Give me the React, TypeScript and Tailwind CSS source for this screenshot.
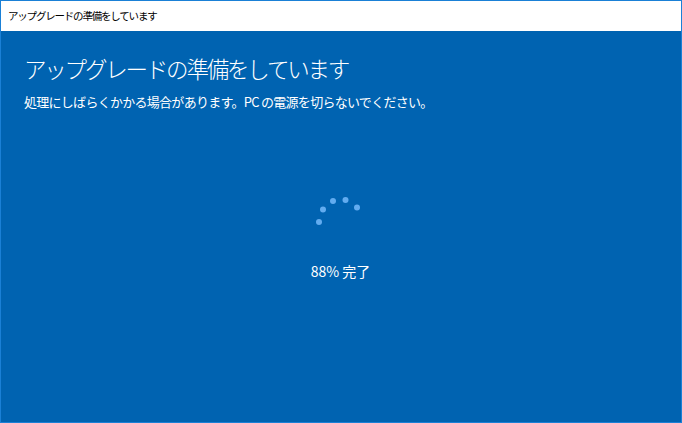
import React from "react";

const font = { fontFamily: '"Noto Sans CJK JP", "Noto Sans", sans-serif' };

export default function App() {
  const dots = [
    [319, 222],
    [323, 209.5],
    [333, 201],
    [345.5, 200],
    [357, 207.5],
  ];
  return (
    <div
      className="w-[682px] h-[423px] border border-[#1a80d6] bg-[#0063b1] flex flex-col overflow-hidden"
      style={font}
    >
      <div className="h-[30px] bg-white flex items-center pl-[7px] text-[10.5px] tracking-[-1.2px] text-black shrink-0">
        アップグレードの準備をしています
      </div>
      <div className="flex-1 relative text-white">
        <div className="pl-[23px] pt-[19px]">
          <div className="text-[22.5px] leading-[36px] font-light tracking-[-2.2px]">
            アップグレードの準備をしています
          </div>
          <div className="text-[13px] leading-[20px] mt-[6px] tracking-[-0.72px]">
            処理にしばらくかかる場合があります。PC の電源を切らないでください。
          </div>
        </div>
        <svg
          className="absolute left-0 top-0"
          width="680"
          height="392"
          viewBox="0 31 680 392"
        >
          {dots.map(([x, y], i) => (
            <circle key={i} cx={x - 1} cy={y} r="3" fill="#62acf0" />
          ))}
        </svg>
        <div className="absolute left-0 right-0 top-[230px] text-center text-[14px] leading-[20px] pr-[1px]">
          88% 完了
        </div>
      </div>
    </div>
  );
}
